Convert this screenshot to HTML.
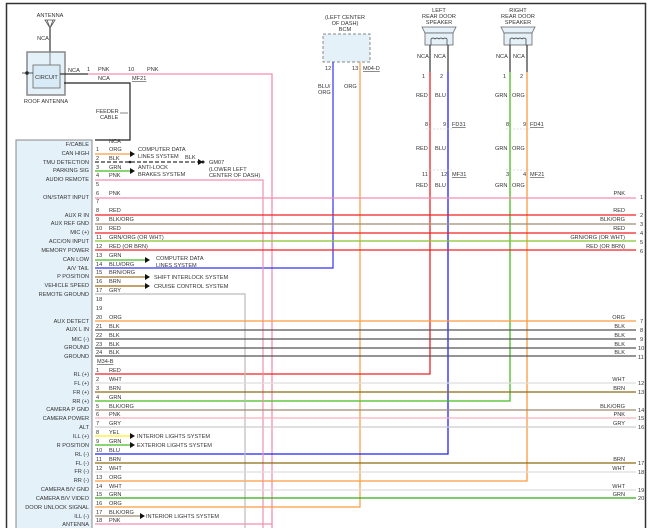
<!DOCTYPE html>
<html><head><meta charset="utf-8"><style>
html,body{margin:0;padding:0;background:#fff}
svg{display:block}
text{font-family:"Liberation Sans",sans-serif;font-size:5.6px;fill:#333}
.r{text-anchor:end}
.m{text-anchor:middle}
</style></head><body>
<svg width="650" height="528" viewBox="0 0 650 528" xmlns="http://www.w3.org/2000/svg">
<!-- frame -->
<path d="M6.5,528 V3.5 H645.5 V528" fill="none" stroke="#333" stroke-width="1.5"/>
<!-- module box -->
<rect x="16" y="140" width="76" height="392" fill="#e4f1f9" stroke="#888" stroke-width="1"/>
<!-- antenna -->
<text x="50" y="17" class="m">ANTENNA</text>
<path d="M45,20 L55,20 L50,28 Z M47,20 L50,28 L53,20" fill="none" stroke="#555" stroke-width="0.8"/>
<text x="43" y="40" class="m">NCA</text>
<line x1="50" y1="28" x2="50" y2="52" stroke="#333" stroke-width="1.2"/>
<rect x="27" y="52" width="38" height="43" fill="#e4f1f9" stroke="#888" stroke-width="1.5"/>
<rect x="33" y="65" width="27" height="23" fill="#d8eaf6" stroke="#666" stroke-width="0.8"/>
<line x1="50" y1="52" x2="50" y2="65" stroke="#666" stroke-width="0.8"/>
<text x="46.5" y="79" class="m">CIRCUIT</text>
<circle cx="27" cy="73" r="1.8" fill="#222"/><line x1="22" y1="73" x2="33" y2="73" stroke="#333" stroke-width="0.8"/>
<text x="46" y="103" class="m">ROOF ANTENNA</text>
<line x1="60" y1="74" x2="88" y2="74" stroke="#333" stroke-width="1.2"/>
<text x="68" y="72">NCA</text><text x="87" y="71">1</text><text x="98" y="71">PNK</text>
<text x="128" y="71">10</text><text x="147" y="71">PNK</text>
<text x="98" y="80">NCA</text><text x="132" y="80" text-decoration="underline">MF21</text>
<path d="M88,74 H272 V528" fill="none" stroke="#f48fb1" stroke-width="1.3"/>
<path d="M64,83 H130 V140 H95" fill="none" stroke="#222" stroke-width="1.2"/>
<text x="96" y="113">FEEDER</text><text x="100" y="119">CABLE</text>
<line x1="120" y1="113" x2="128" y2="113" stroke="#333" stroke-width="0.6"/>
<!-- BCM -->
<text x="345" y="19" class="m">(LEFT CENTER</text><text x="345" y="25" class="m">OF DASH)</text><text x="345" y="31" class="m">BCM</text>
<rect x="323" y="34" width="47" height="28" fill="#e4f1f9" stroke="#888" stroke-dasharray="3,2"/>
<text x="325" y="70">12</text><text x="352" y="70">13</text><text x="363" y="70" text-decoration="underline">M04-D</text>
<text x="318" y="88">BLU/</text><text x="318" y="94">ORG</text><text x="344" y="88">ORG</text>
<path d="M333,62 V268 H95" fill="none" stroke="#3333ee" stroke-width="1.2"/>
<path d="M360,62 V507 H95" fill="none" stroke="#fb9a40" stroke-width="1.2"/>
<!-- left speaker -->
<text x="439" y="12" class="m">LEFT</text><text x="439" y="18" class="m">REAR DOOR</text><text x="439" y="24" class="m">SPEAKER</text>
<path d="M422,27 H456 L453,33 H425 Z" fill="#e4f1f9" stroke="#666" stroke-width="0.8"/>
<rect x="425" y="33" width="28" height="12" fill="#e4f1f9" stroke="#666" stroke-width="0.8"/>
<path d="M431,45 V39 q2,-2 4,0 q2,-2 4,0 q2,-2 4,0 q2,-2 4,0 V45" fill="none" stroke="#333" stroke-width="0.7"/>
<text x="417" y="58">NCA</text><text x="434" y="58">NCA</text>
<line x1="430" y1="45" x2="430" y2="72" stroke="#333" stroke-width="1.2"/>
<line x1="448" y1="45" x2="448" y2="72" stroke="#333" stroke-width="1.2"/>
<path d="M430,72 V374 H95" fill="none" stroke="#f02020" stroke-width="1.3"/>
<path d="M448,72 V454 H95" fill="none" stroke="#2020f0" stroke-width="1.3"/>
<text x="422" y="78">1</text><text x="440" y="78">2</text>
<text x="416" y="97">RED</text><text x="435" y="97">BLU</text>
<text x="425" y="126">8</text><text x="443" y="126">9</text><text x="452" y="126" text-decoration="underline">FD31</text>
<text x="416" y="150">RED</text><text x="435" y="150">BLU</text>
<text x="422" y="176">11</text><text x="441" y="176">12</text><text x="452" y="176" text-decoration="underline">MF31</text>
<text x="416" y="187">RED</text><text x="435" y="187">BLU</text>
<!-- right speaker -->
<text x="518" y="12" class="m">RIGHT</text><text x="518" y="18" class="m">REAR DOOR</text><text x="518" y="24" class="m">SPEAKER</text>
<path d="M501,27 H535 L532,33 H504 Z" fill="#e4f1f9" stroke="#666" stroke-width="0.8"/>
<rect x="504" y="33" width="28" height="12" fill="#e4f1f9" stroke="#666" stroke-width="0.8"/>
<path d="M510,45 V39 q2,-2 4,0 q2,-2 4,0 q2,-2 4,0 q2,-2 4,0 V45" fill="none" stroke="#333" stroke-width="0.7"/>
<text x="496" y="58">NCA</text><text x="513" y="58">NCA</text>
<line x1="510" y1="45" x2="510" y2="72" stroke="#333" stroke-width="1.2"/>
<line x1="527" y1="45" x2="527" y2="72" stroke="#333" stroke-width="1.2"/>
<path d="M510,72 V401 H95" fill="none" stroke="#44bb22" stroke-width="1.3"/>
<path d="M527,72 V481 H95" fill="none" stroke="#fb9a40" stroke-width="1.3"/>
<text x="503" y="78">1</text><text x="520" y="78">2</text>
<text x="495" y="97">GRN</text><text x="512" y="97">ORG</text>
<text x="506" y="126">8</text><text x="523" y="126">9</text><text x="530" y="126" text-decoration="underline">FD41</text>
<text x="506" y="176">3</text><text x="523" y="176">4</text><text x="530" y="176" text-decoration="underline">MF21</text>
<text x="495" y="150">GRN</text><text x="512" y="150">ORG</text>
<text x="495" y="187">GRN</text><text x="512" y="187">ORG</text>
<!-- connector dashes -->
<g stroke="#bbb" stroke-width="0.6" stroke-dasharray="2,1.5"><line x1="426" y1="129" x2="452" y2="129"/><line x1="426" y1="170" x2="452" y2="170"/><line x1="506" y1="129" x2="531" y2="129"/><line x1="506" y1="170" x2="531" y2="170"/></g>
<!-- verticals -->
<path d="M95,180 H263 V528" fill="none" stroke="#f48fb1" stroke-width="1.2"/>
<path d="M95,294 H245 V528" fill="none" stroke="#bbb" stroke-width="1.2"/>
<path d="M95,524 H272" fill="none" stroke="#f48fb1" stroke-width="1.2"/>
<!-- short wires with arrows -->
<g stroke-width="1.2" fill="none">
<line x1="95" y1="154" x2="130" y2="154" stroke="#fb9a40"/>
<line x1="95" y1="162" x2="200" y2="162" stroke="#333" stroke-dasharray="4,2"/>
<line x1="95" y1="171" x2="130" y2="171" stroke="#44bb22"/>
<line x1="95" y1="260" x2="145" y2="260" stroke="#44bb22"/>
<line x1="95" y1="277" x2="145" y2="277" stroke="#a07830"/>
<line x1="95" y1="286" x2="145" y2="286" stroke="#9a6a10"/>
<line x1="95" y1="436" x2="130" y2="436" stroke="#ffee22"/>
<line x1="95" y1="445" x2="130" y2="445" stroke="#44bb22"/>
<line x1="95" y1="516" x2="140" y2="516" stroke="#a08a70"/>
</g>
<circle cx="130" cy="162" r="1.3" fill="#222"/><circle cx="203" cy="162" r="1.5" fill="#222"/>
<g fill="#111">
<path d="M130,151 L135,154 L130,157Z"/><path d="M130,168 L135,171 L130,174Z"/><path d="M198,159 L203,162 L198,165Z"/>
<path d="M145,257 L150,260 L145,263Z"/><path d="M145,274 L150,277 L145,280Z"/><path d="M145,283 L150,286 L145,289Z"/>
<path d="M130,433 L135,436 L130,439Z"/><path d="M130,442 L135,445 L130,448Z"/><path d="M140,513 L145,516 L140,519Z"/>
</g>
<text x="138" y="151">COMPUTER DATA</text><text x="138" y="158">LINES SYSTEM</text>
<text x="185" y="159">BLK</text>
<text x="209" y="164">GM07</text><text x="209" y="171">(LOWER LEFT</text><text x="209" y="177">CENTER OF DASH)</text>
<text x="138" y="169">ANTI-LOCK</text><text x="138" y="176">BRAKES SYSTEM</text>
<text x="156" y="260">COMPUTER DATA</text><text x="156" y="267">LINES SYSTEM</text>
<text x="154" y="279">SHIFT INTERLOCK SYSTEM</text>
<text x="154" y="288">CRUISE CONTROL SYSTEM</text>
<text x="137" y="438">INTERIOR LIGHTS SYSTEM</text>
<text x="137" y="447">EXTERIOR LIGHTS SYSTEM</text>
<text x="146" y="518">INTERIOR LIGHTS SYSTEM</text>
<!-- long wires -->
<g stroke-width="1.2">
<line x1="95" y1="198" x2="636" y2="198" stroke="#f48fb1"/>
<line x1="95" y1="215" x2="636" y2="215" stroke="#f02020"/>
<line x1="95" y1="224" x2="636" y2="224" stroke="#a08a70"/>
<line x1="95" y1="233" x2="636" y2="233" stroke="#f02020"/>
<line x1="95" y1="241" x2="636" y2="241" stroke="#88c030"/>
<line x1="95" y1="250" x2="636" y2="250" stroke="#f02020"/>
<line x1="95" y1="321" x2="636" y2="321" stroke="#fb9a40"/>
<line x1="95" y1="330" x2="636" y2="330" stroke="#555"/>
<line x1="95" y1="339" x2="636" y2="339" stroke="#555"/>
<line x1="95" y1="348" x2="636" y2="348" stroke="#555"/>
<line x1="95" y1="356" x2="636" y2="356" stroke="#555"/>
<line x1="95" y1="383" x2="636" y2="383" stroke="#ddd"/>
<line x1="95" y1="392" x2="636" y2="392" stroke="#8a6a10"/>
<line x1="95" y1="410" x2="636" y2="410" stroke="#a08a70"/>
<line x1="95" y1="418" x2="636" y2="418" stroke="#f8b0c0"/>
<line x1="95" y1="427" x2="636" y2="427" stroke="#ccc"/>
<line x1="95" y1="463" x2="636" y2="463" stroke="#8a6a10"/>
<line x1="95" y1="472" x2="636" y2="472" stroke="#ddd"/>
<line x1="95" y1="490" x2="636" y2="490" stroke="#ddd"/>
<line x1="95" y1="498" x2="636" y2="498" stroke="#33aa11"/>
</g>
<!-- function labels -->
<g class="r">
<text x="89" y="146" class="r">F/CABLE</text><text x="89" y="155" class="r">CAN HIGH</text>
<text x="89" y="164" class="r">TMU DETECTION</text><text x="89" y="172" class="r">PARKING SIG</text>
<text x="89" y="181" class="r">AUDIO REMOTE</text><text x="89" y="199" class="r">ON/START INPUT</text>
<text x="89" y="217" class="r">AUX R IN</text><text x="89" y="225" class="r">AUX REF GND</text>
<text x="89" y="234" class="r">MIC (+)</text><text x="89" y="243" class="r">ACC/ON INPUT</text>
<text x="89" y="252" class="r">MEMORY POWER</text><text x="89" y="261" class="r">CAN LOW</text>
<text x="89" y="270" class="r">A/V TAIL</text><text x="89" y="278" class="r">P POSITION</text>
<text x="89" y="287" class="r">VEHICLE SPEED</text><text x="89" y="296" class="r">REMOTE GROUND</text>
<text x="89" y="323" class="r">AUX DETECT</text><text x="89" y="331" class="r">AUX L IN</text>
<text x="89" y="341" class="r">MIC (-)</text><text x="89" y="349" class="r">GROUND</text>
<text x="89" y="358" class="r">GROUND</text>
<text x="89" y="376" class="r">RL (+)</text><text x="89" y="385" class="r">FL (+)</text>
<text x="89" y="394" class="r">FR (+)</text><text x="89" y="403" class="r">RR (+)</text>
<text x="89" y="411" class="r">CAMERA P GND</text><text x="89" y="420" class="r">CAMERA POWER</text>
<text x="89" y="429" class="r">ALT</text><text x="89" y="438" class="r">ILL (+)</text>
<text x="89" y="447" class="r">R POSITION</text><text x="89" y="456" class="r">RL (-)</text>
<text x="89" y="465" class="r">FL (-)</text><text x="89" y="473" class="r">FR (-)</text>
<text x="89" y="482" class="r">RR (-)</text><text x="89" y="491" class="r">CAMERA B/V GND</text>
<text x="89" y="500" class="r">CAMERA B/V VIDEO</text><text x="89" y="509" class="r">DOOR UNLOCK SIGNAL</text>
<text x="89" y="518" class="r">ILL (-)</text><text x="89" y="526" class="r">ANTENNA</text>
</g>
<!-- pin numbers and colors -->
<g>
<text x="109" y="143">NCA</text>
<text x="96" y="151">1</text><text x="109" y="151">ORG</text>
<text x="96" y="160">2</text><text x="109" y="160">BLK</text>
<text x="96" y="169">3</text><text x="109" y="169">GRN</text>
<text x="96" y="177">4</text><text x="109" y="177">PNK</text>
<text x="96" y="186">5</text>
<text x="96" y="195">6</text><text x="109" y="195">PNK</text>
<text x="96" y="203">7</text>
<text x="96" y="212">8</text><text x="109" y="212">RED</text>
<text x="96" y="221">9</text><text x="109" y="221">BLK/ORG</text>
<text x="96" y="230">10</text><text x="109" y="230">RED</text>
<text x="96" y="239">11</text><text x="109" y="239">GRN/ORG (OR WHT)</text>
<text x="96" y="248">12</text><text x="109" y="248">RED (OR BRN)</text>
<text x="96" y="257">13</text><text x="109" y="257">GRN</text>
<text x="96" y="266">14</text><text x="109" y="266">BLU/ORG</text>
<text x="96" y="274">15</text><text x="109" y="274">BRN/ORG</text>
<text x="96" y="283">16</text><text x="109" y="283">BRN</text>
<text x="96" y="292">17</text><text x="109" y="292">GRY</text>
<text x="96" y="301">18</text>
<text x="96" y="310">19</text>
<text x="96" y="319">20</text><text x="109" y="319">ORG</text>
<text x="96" y="328">21</text><text x="109" y="328">BLK</text>
<text x="96" y="337">22</text><text x="109" y="337">BLK</text>
<text x="96" y="346">23</text><text x="109" y="346">BLK</text>
<text x="96" y="354">24</text><text x="109" y="354">BLK</text>
<text x="97" y="363" text-decoration="underline">M34-B</text>
<text x="96" y="372">1</text><text x="109" y="372">RED</text>
<text x="96" y="381">2</text><text x="109" y="381">WHT</text>
<text x="96" y="390">3</text><text x="109" y="390">BRN</text>
<text x="96" y="399">4</text><text x="109" y="399">GRN</text>
<text x="96" y="408">5</text><text x="109" y="408">BLK/ORG</text>
<text x="96" y="416">6</text><text x="109" y="416">PNK</text>
<text x="96" y="425">7</text><text x="109" y="425">GRY</text>
<text x="96" y="434">8</text><text x="109" y="434">YEL</text>
<text x="96" y="443">9</text><text x="109" y="443">GRN</text>
<text x="96" y="452">10</text><text x="109" y="452">BLU</text>
<text x="96" y="461">11</text><text x="109" y="461">BRN</text>
<text x="96" y="470">12</text><text x="109" y="470">WHT</text>
<text x="96" y="479">13</text><text x="109" y="479">ORG</text>
<text x="96" y="488">14</text><text x="109" y="488">WHT</text>
<text x="96" y="496">15</text><text x="109" y="496">GRN</text>
<text x="96" y="505">16</text><text x="109" y="505">ORG</text>
<text x="96" y="514">17</text><text x="109" y="514">BLK/ORG</text>
<text x="96" y="522">18</text><text x="109" y="522">PNK</text>
</g>
<!-- right labels -->
<g>
<text x="625" y="195" class="r">PNK</text><text x="640" y="199">1</text>
<text x="625" y="212" class="r">RED</text><text x="640" y="217">2</text>
<text x="625" y="221" class="r">BLK/ORG</text><text x="640" y="226">3</text>
<text x="625" y="230" class="r">RED</text><text x="640" y="235">4</text>
<text x="625" y="239" class="r">GRN/ORG (OR WHT)</text><text x="640" y="244">5</text>
<text x="625" y="248" class="r">RED (OR BRN)</text><text x="640" y="253">6</text>
<text x="625" y="319" class="r">ORG</text><text x="640" y="323">7</text>
<text x="625" y="328" class="r">BLK</text><text x="640" y="332">8</text>
<text x="625" y="337" class="r">BLK</text><text x="640" y="341">9</text>
<text x="625" y="346" class="r">BLK</text><text x="638" y="350">10</text>
<text x="625" y="354" class="r">BLK</text><text x="638" y="359">11</text>
<text x="625" y="381" class="r">WHT</text><text x="638" y="385">12</text>
<text x="625" y="390" class="r">BRN</text><text x="638" y="394">13</text>
<text x="625" y="408" class="r">BLK/ORG</text><text x="638" y="412">14</text>
<text x="625" y="416" class="r">PNK</text><text x="638" y="420">15</text>
<text x="625" y="425" class="r">GRY</text><text x="638" y="429">16</text>
<text x="625" y="461" class="r">BRN</text><text x="638" y="465">17</text>
<text x="625" y="470" class="r">WHT</text><text x="638" y="474">18</text>
<text x="625" y="488" class="r">WHT</text><text x="638" y="492">19</text>
<text x="625" y="496" class="r">GRN</text><text x="638" y="500">20</text>
</g>
</svg>
</body></html>
